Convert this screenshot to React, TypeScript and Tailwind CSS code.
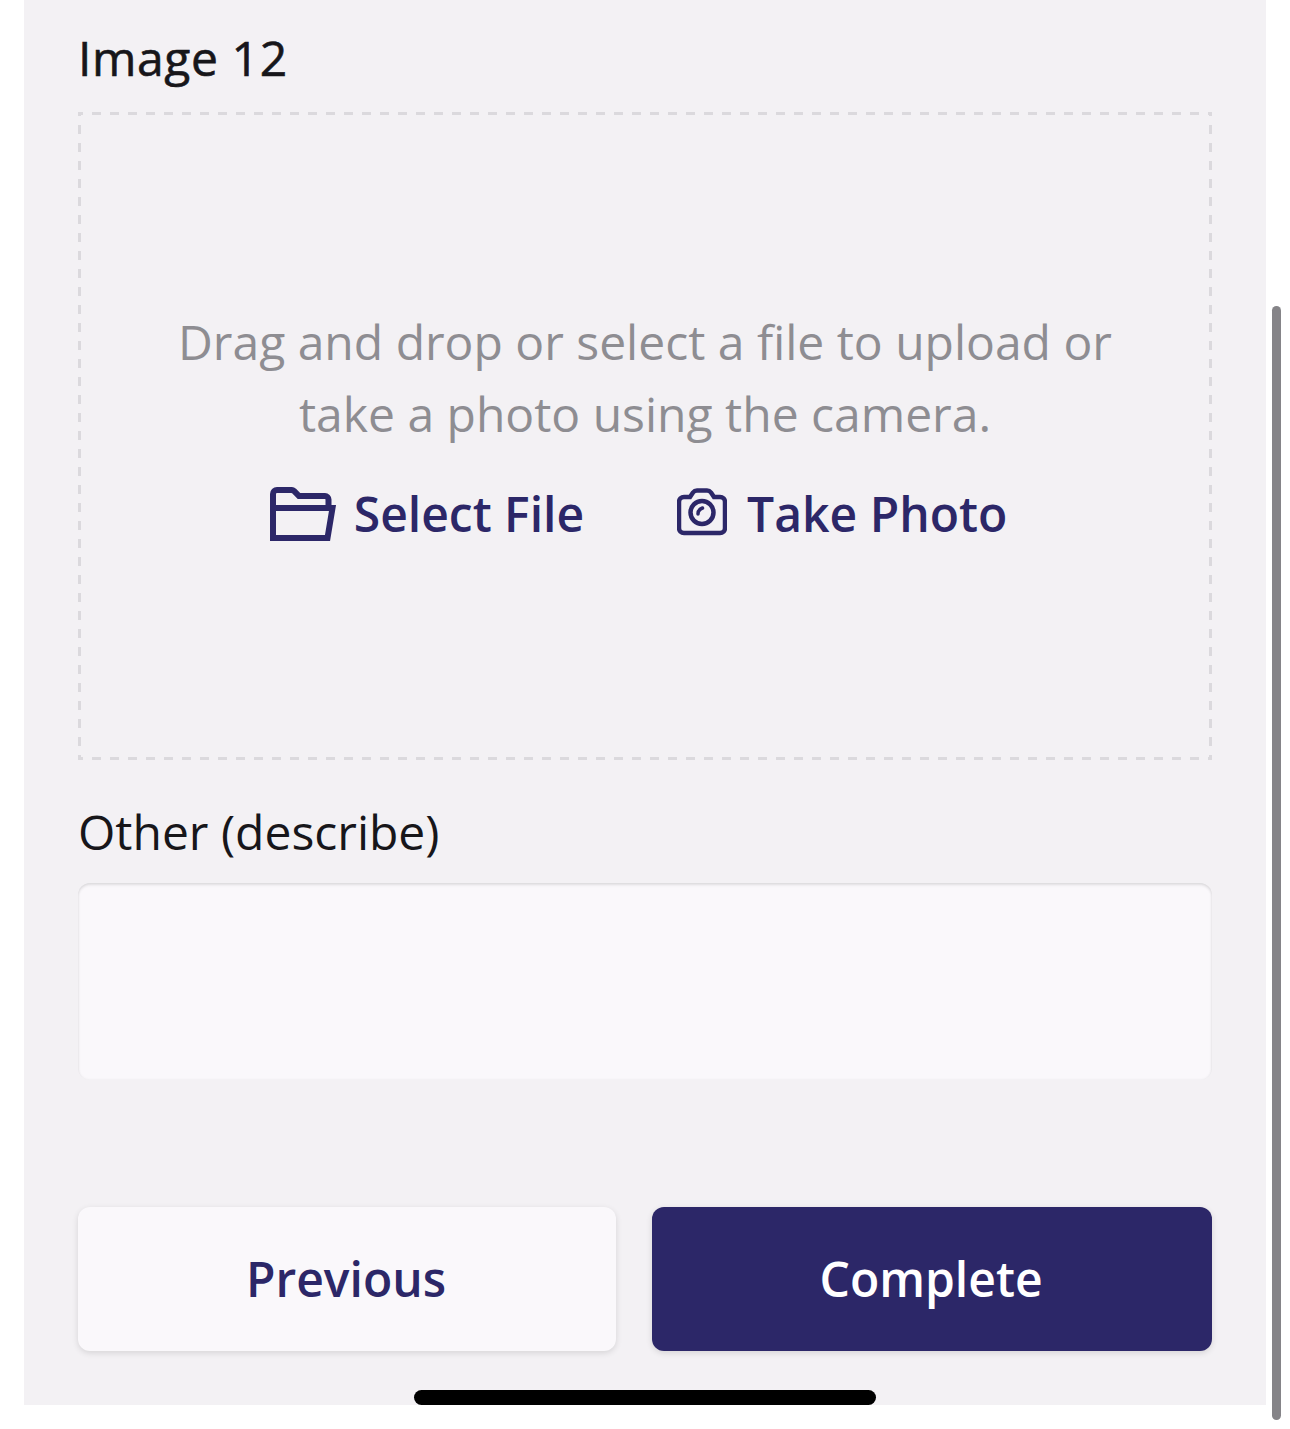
import React from 'react';

const FolderIcon = () => (
  <svg width="66" height="54" viewBox="0 0 66 54" fill="none" stroke="#2c2768" strokeWidth="6" className="shrink-0">
    <path d="M3 21V7a4 4 0 0 1 4-4h14a4 4 0 0 1 3 1l5 5h26a3.500 3.500 0 0 1 3.500 3.500V21" />
    <path d="M3 18v33h54.500L62.500 21H3" />
  </svg>
);

const CameraIcon = () => (
  <svg width="50" height="48" viewBox="0 0 50 48" fill="none" stroke="#2c2768" strokeWidth="4.500" className="shrink-0 mb-[4px]">
    <path d="M7 9h6l3-4.500A5 5 0 0 1 20 2.500h10a5 5 0 0 1 4 2l3 4.500h6a5 5 0 0 1 5 5v26a5 5 0 0 1-5 5H7a5 5 0 0 1-5-5V14a5 5 0 0 1 5-5z" />
    <circle cx="25" cy="24.500" r="11.500" />
    <path d="M21 26c0-3 1.500-5 4.500-6" strokeLinecap="round" strokeWidth="3.500" />
  </svg>
);

export default function App() {
  return (
    <div className="relative w-[1290px] h-[1429px] bg-white overflow-hidden font-['Open_Sans',sans-serif]">
      <div className="ml-[24px] w-[1242px] h-[1405px] bg-[#f3f1f4] px-[54px] flex flex-col">
        <h2 className="h-[112px] pt-[25px] text-[48px] leading-[66px] font-normal tracking-[0.6px] [-webkit-text-stroke:0.6px_#17161a] text-[#17161a]">Image 12</h2>

        <div className="h-[648px] flex flex-col items-center pt-[194px] [background-image:linear-gradient(90deg,#dbd9dd_9.500px,transparent_9.500px),linear-gradient(90deg,#dbd9dd_9.500px,transparent_9.500px),linear-gradient(#dbd9dd_9.500px,transparent_9.500px),linear-gradient(#dbd9dd_9.500px,transparent_9.500px)] [background-size:18px_3px,18px_3px,3px_18px,3px_18px] [background-position:-4px_0,-4px_100%,0_-5px,100%_-5px] [background-repeat:repeat-x,repeat-x,repeat-y,repeat-y]">
          <p className="text-[48px] leading-[72px] text-[#8e8d92] text-center w-[1000px]">
            Drag and drop or select a file to upload or take a photo using the camera.
          </p>
          <div className="flex items-center mt-[34px] mr-[13px] h-[60px]">
            <button className="flex items-center gap-[18px] text-[48px] font-semibold text-[#2c2768]">
              <FolderIcon />
              Select File
            </button>
            <button className="flex items-center gap-[20px] ml-[93px] text-[48px] font-semibold text-[#2c2768]">
              <CameraIcon />
              Take Photo
            </button>
          </div>
        </div>

        <label className="mt-[39px] h-[84px] text-[48px] leading-[66px] text-[#17161a]">Other (describe)</label>
        <div className="h-[197px] rounded-[12px] bg-[#faf8fb] shadow-[inset_0_2px_3px_rgba(0,0,0,0.1),inset_0_0_3px_rgba(0,0,0,0.06)]" />

        <div className="flex gap-[36px] mt-[127px]">
          <button className="w-[538px] h-[144px] pr-[2px] rounded-[12px] bg-[#faf8fb] text-[48px] font-semibold text-[#2c2768] shadow-[0_2px_6px_rgba(0,0,0,0.12)]">
            Previous
          </button>
          <button className="w-[560px] h-[144px] pr-[2px] rounded-[12px] bg-[#2c2768] text-[48px] font-semibold text-white shadow-[0_2px_6px_rgba(0,0,0,0.12)]">
            Complete
          </button>
        </div>
      </div>

      <div className="absolute left-[414px] top-[1390px] w-[462px] h-[15px] rounded-full bg-black" />
      <div className="absolute left-[1272px] top-[306px] w-[9px] h-[1114px] rounded-full bg-[#858488]" />
    </div>
  );
}
